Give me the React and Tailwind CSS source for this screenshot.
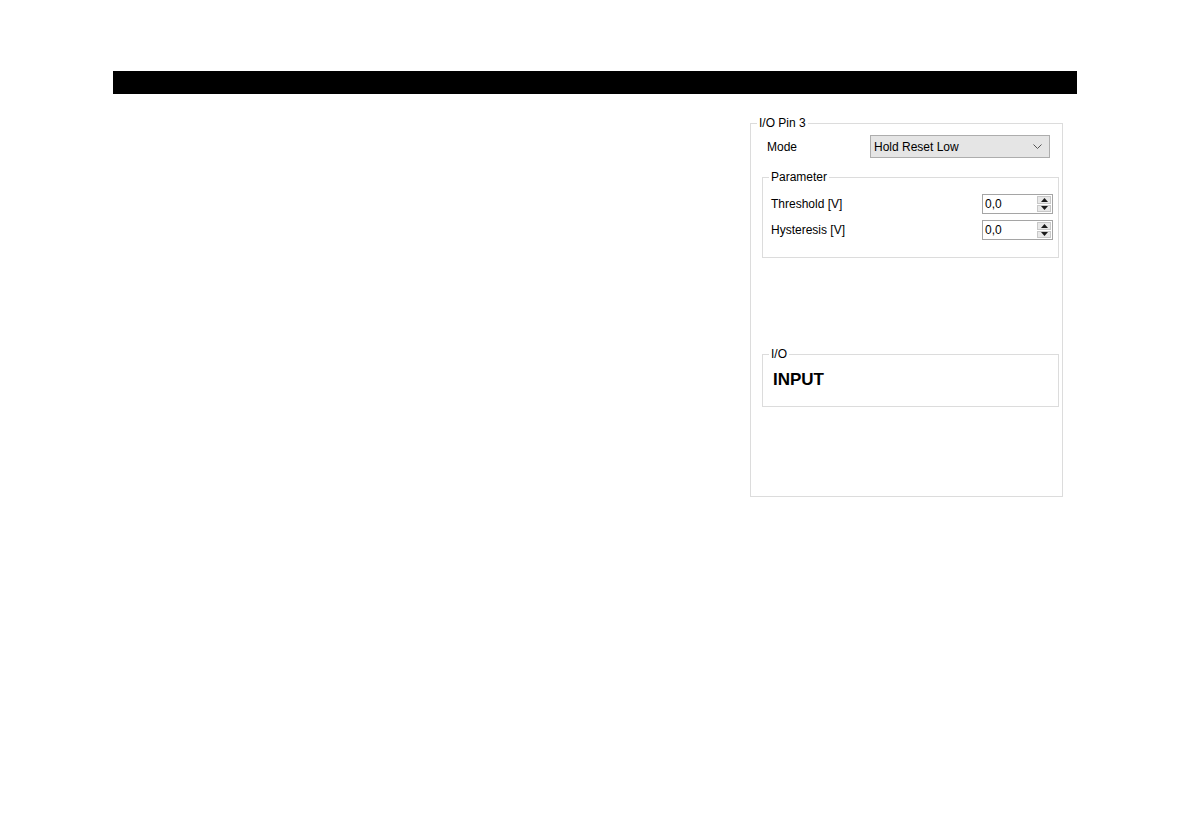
const FONT = { fontFamily: '"Liberation Sans", Arial, sans-serif' };

function GroupBox({ title, className, legendClass = 'ml-[6px]', children }) {
  return (
    <fieldset className={`border border-[#dcdcdc] p-0 m-0 ${className}`}>
      <legend className={`${legendClass} px-[2px] text-[12px] leading-[14px] text-black`}>{title}</legend>
      {children}
    </fieldset>
  );
}

function SpinBox({ value }) {
  return (
    <div className="flex h-[20px] w-[71px] border border-[#a5a5a5] bg-white">
      <div className="flex-1 pl-[2px] text-[12px] leading-[18px] text-black">{value}</div>
      <div className="my-[1px] mr-[1px] flex w-[14px] flex-col gap-[1px]">
        <div className="flex flex-1 items-center justify-center border border-[#c8c8c8] bg-[#e8e8e8]">
          <svg width="7" height="4" viewBox="0 0 7 4">
            <path d="M3.5 0 L7 4 L0 4 Z" fill="#1a1a1a" />
          </svg>
        </div>
        <div className="flex flex-1 items-center justify-center border border-[#c8c8c8] bg-[#e8e8e8]">
          <svg width="7" height="4" viewBox="0 0 7 4">
            <path d="M0 0 L7 0 L3.5 4 Z" fill="#1a1a1a" />
          </svg>
        </div>
      </div>
    </div>
  );
}

function ParamRow({ label, value }) {
  return (
    <div className="flex h-[20px] items-center justify-between">
      <span className="text-[12px] leading-[14px] text-black">{label}</span>
      <SpinBox value={value} />
    </div>
  );
}

export default function App() {
  return (
    <div className="min-h-screen bg-white pl-[113px] pt-[71px]" style={FONT}>
      <div className="h-[23px] w-[964px] bg-black" />

      <div className="ml-[637px] mt-[22px] w-[313px]">
        <GroupBox title="I/O Pin 3" className="h-[381px]">
          <div className="pl-[16px] pr-[12px] pt-[5px]">
            <div className="flex items-center justify-between">
              <span className="text-[12px] leading-[14px] text-black">Mode</span>
              <div className="flex h-[23px] w-[180px] items-center justify-between border border-[#adadad] bg-[#e5e5e5] pl-[3px] pr-[7px]">
                <span className="text-[12px] leading-[14px] text-black">Hold Reset Low</span>
                <svg width="9" height="5" viewBox="0 0 9 5">
                  <path d="M0.5 0.5 L4.5 4.5 L8.5 0.5" fill="none" stroke="#555" strokeWidth="1" />
                </svg>
              </div>
            </div>
          </div>

          <div className="ml-[11px] mr-[3px] mt-[12px]">
            <GroupBox title="Parameter" className="w-[297px]">
              <div className="flex flex-col gap-[6px] pb-[17px] pl-[8px] pr-[5px] pt-[10px]">
                <ParamRow label="Threshold [V]" value="0,0" />
                <ParamRow label="Hysteresis [V]" value="0,0" />
              </div>
            </GroupBox>

            <GroupBox title="I/O" className="mt-[89px] w-[297px]">
              <div className="pb-[16px] pl-[10px] pt-[9px] text-[17px] font-bold leading-[20px] text-black">INPUT</div>
            </GroupBox>
          </div>
        </GroupBox>
      </div>
    </div>
  );
}
